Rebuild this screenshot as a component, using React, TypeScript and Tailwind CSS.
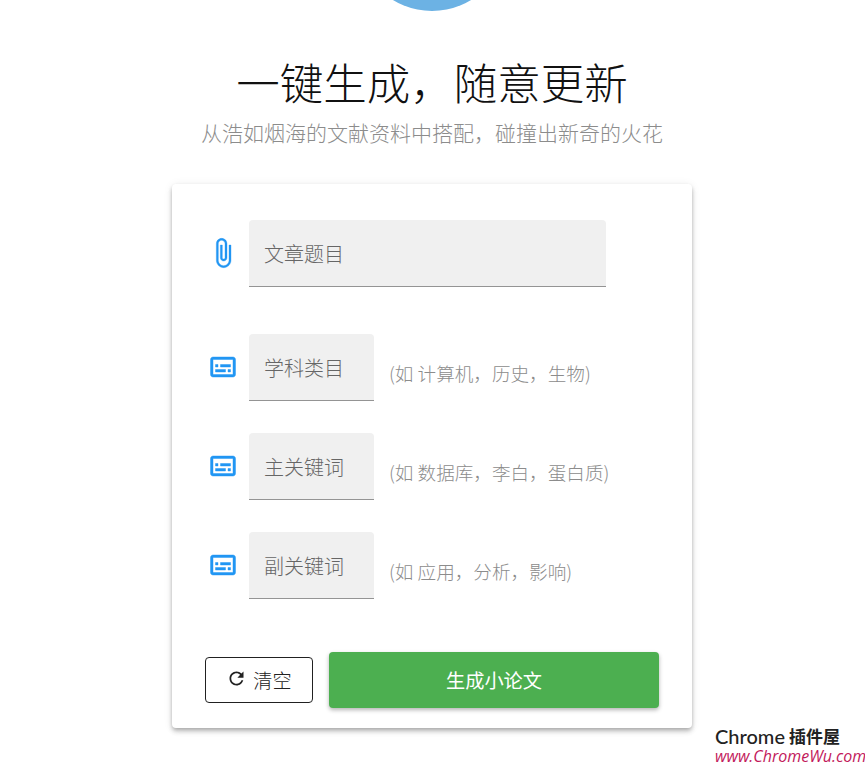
import type { ReactNode } from "react";

const font = { fontFamily: '"Noto Sans CJK SC", "Liberation Sans", sans-serif' };

function IconSlot({ children }: { children: ReactNode }) {
  return <div className="w-[35px] mr-[9px] -mt-[1px] flex justify-center text-[#2196f3]">{children}</div>;
}

function SubtitlesIcon() {
  return (
    <svg viewBox="0 0 24 24" className="w-[30px] h-[30px] shrink-0" fill="currentColor" stroke="currentColor" strokeWidth="0.35">
      <path d="M20 4H4c-1.1 0-2 .9-2 2v12c0 1.1.9 2 2 2h16c1.1 0 2-.9 2-2V6c0-1.1-.9-2-2-2zm0 14H4V6h16v12zM6 10h2v2H6zm0 4h8v2H6zm10 0h2v2h-2zm-6-4h8v2h-8z" />
    </svg>
  );
}

function ClipIcon() {
  return (
    <svg viewBox="0 0 24 24" className="w-[32px] h-[32px] shrink-0" fill="currentColor" stroke="currentColor" strokeWidth="0.25">
      <path d="M16.5 6v11.5c0 2.21-1.79 4-4 4s-4-1.79-4-4V5c0-1.38 1.12-2.5 2.5-2.5s2.5 1.12 2.5 2.5v10.5c0 .55-.45 1-1 1s-1-.45-1-1V6H10v9.5c0 1.38 1.12 2.5 2.5 2.5s2.5-1.12 2.5-2.5V5c0-2.21-1.79-4-4-4S7 2.79 7 5v12.5c0 3.04 2.46 5.5 5.5 5.5s5.5-2.46 5.5-5.5V6h-1.5z" />
    </svg>
  );
}

function RefreshIcon() {
  return (
    <svg viewBox="0 0 24 24" className="w-[21px] h-[21px] shrink-0 -mt-[4px]" fill="currentColor">
      <path d="M17.65 6.35C16.2 4.9 14.21 4 12 4c-4.42 0-7.99 3.58-7.99 8s3.57 8 7.99 8c3.73 0 6.84-2.55 7.73-6h-2.08c-.82 2.33-3.04 4-5.65 4-3.31 0-6-2.69-6-6s2.69-6 6-6c1.66 0 3.14.69 4.22 1.78L13 11h7V4l-2.35 2.35z" />
    </svg>
  );
}

function Field({ label, hint }: { label: string; hint: string }) {
  return (
    <div className="flex items-center h-[67px]">
      <IconSlot>
        <SubtitlesIcon />
      </IconSlot>
      <div className="w-[125px] h-[67px] bg-[#f0f0f0] rounded-t border-b border-[#949494] flex items-center pl-[15px] pt-[2px] text-[20px] font-light text-[#666]">
        {label}
      </div>
      <span className="ml-[15px] mt-[10px] text-[18.6px] font-light text-[#8c8c8c]">{hint}</span>
    </div>
  );
}

export default function App() {
  return (
    <div className="relative w-[865px] h-[764px] bg-white overflow-hidden" style={font}>
      <div className="absolute left-[357px] top-[-139px] w-[150px] h-[150px] rounded-full bg-[#6cb2e4]" />
      <div className="w-[864px] flex flex-col items-center pt-[54px]">
        <h1 className="text-[43.5px] leading-[56px] font-light text-[#111]">一键生成，随意更新</h1>
        <p className="mt-[7px] text-[21px] leading-[30px] font-light text-[#8c8c8c]">从浩如烟海的文献资料中搭配，碰撞出新奇的火花</p>
        <div className="mt-[37px] w-[520px] h-[544px] bg-white rounded shadow-[0_2px_4px_-1px_rgba(0,0,0,0.25),0_4px_5px_0_rgba(0,0,0,0.14),0_1px_10px_0_rgba(0,0,0,0.08)] pl-[33px] pt-[36px]">
          <div className="flex items-center h-[67px]">
            <IconSlot>
              <ClipIcon />
            </IconSlot>
            <div className="w-[357px] h-[67px] bg-[#f0f0f0] rounded-t border-b border-[#949494] flex items-center pl-[15px] pt-[2px] text-[20px] font-light text-[#666]">
              文章题目
            </div>
          </div>
          <div className="mt-[47px] flex flex-col gap-[32px]">
            <Field label="学科类目" hint="(如 计算机，历史，生物)" />
            <Field label="主关键词" hint="(如 数据库，李白，蛋白质)" />
            <Field label="副关键词" hint="(如 应用，分析，影响)" />
          </div>
          <div className="flex items-center mt-[53px] gap-[16px]">
            <button className="w-[108px] h-[46px] rounded border border-[#212121] flex items-center justify-center gap-[6px] text-[19.2px] font-light text-[#212121] bg-white">
              <RefreshIcon />
              清空
            </button>
            <button className="w-[330px] h-[56px] rounded bg-[#4caf50] text-white text-[19.2px] shadow-[0_2px_4px_rgba(0,0,0,0.3)]">
              生成小论文
            </button>
          </div>
        </div>
      </div>
      <div className="absolute left-[715px] top-[725px] flex flex-col whitespace-nowrap">
        <span className="h-[22px] flex items-center gap-[4px] font-bold text-[#222]">
          <span className="text-[20px] leading-[22px] font-medium" style={{ fontFamily: '"Lato", sans-serif' }}>Chrome</span>
          <span className="text-[17px] leading-[22px]">插件屋</span>
        </span>
        <span className="text-[16px] leading-[15px] mt-[2px] font-medium italic text-[#c2185b]" style={{ fontFamily: '"Open Sans", sans-serif' }}>www.ChromeWu.com</span>
      </div>
    </div>
  );
}
